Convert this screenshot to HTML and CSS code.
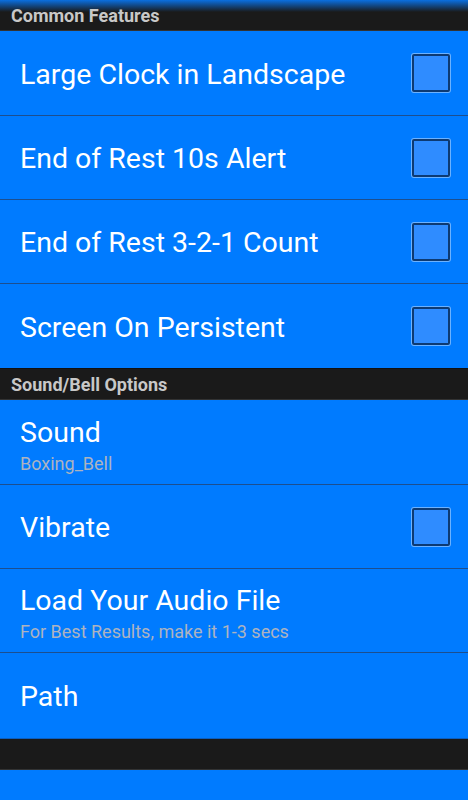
FILE: index.html
```html
<!DOCTYPE html>
<html lang="en">
<head>
  <meta charset="UTF-8">
  <title>Settings</title>
  <link rel="stylesheet" href="styles.css">
</head>
<body>
  <div class="section-head">Common Features</div>
  <div class="pref first">
    <div class="pref-text"><div class="pref-title">Large Clock in Landscape</div></div>
    <div class="check"></div>
  </div>
  <div class="pref">
    <div class="pref-text"><div class="pref-title">End of Rest 10s Alert</div></div>
    <div class="check"></div>
  </div>
  <div class="pref">
    <div class="pref-text"><div class="pref-title">End of Rest 3-2-1 Count</div></div>
    <div class="check"></div>
  </div>
  <div class="pref last">
    <div class="pref-text"><div class="pref-title">Screen On Persistent</div></div>
    <div class="check"></div>
  </div>

  <div class="section-head">Sound/Bell Options</div>
  <div class="pref first two-line">
    <div class="pref-text">
      <div class="pref-title">Sound</div>
      <div class="pref-sub">Boxing_Bell</div>
    </div>
  </div>
  <div class="pref">
    <div class="pref-text"><div class="pref-title">Vibrate</div></div>
    <div class="check"></div>
  </div>
  <div class="pref two-line">
    <div class="pref-text">
      <div class="pref-title">Load Your Audio File</div>
      <div class="pref-sub">For Best Results, make it 1-3 secs</div>
    </div>
  </div>
  <div class="pref last big">
    <div class="pref-text"><div class="pref-title">Path</div></div>
  </div>

  <div class="section-head empty"></div>
  <div class="pref last tail"></div>
</body>
</html>
```

FILE: styles.css
```css
body {
  margin: 0;
  background-color: #007bff;
  font-family: Roboto, 'Noto Sans', sans-serif;
  color: white;
  overflow: hidden;
}
.section-head {
  height: 32px;
  box-sizing: border-box;
  padding: 5px 11px 0;
  background-color: #1a1a1a;
  color: #c8c8c8;
  font-size: 18px;
  font-weight: bold;
  line-height: 21px;
  border-top: 1px solid #111;
  border-bottom: 1px solid #333;
}
.section-head:first-child {
  height: 31px;
  border-top: none;
  background: linear-gradient(to bottom, #0a6fe0 0, #1a1a1a 12px);
}
.section-head.empty {
  border-top-color: #0b5ec0;
}
.pref {
  height: 84px;
  box-sizing: border-box;
  display: flex;
  align-items: center;
  padding: 3px 18px 0 20px;
  border-bottom: 1px solid #1d4f8f;
}
.pref.first {
  height: 85px;
}
.pref.two-line {
  padding-top: 6px;
}
.pref.last {
  border-bottom: none;
}
.pref.big {
  height: 85px;
}
.pref.tail {
  height: 40px;
}
.pref-text {
  flex: 1;
}
.pref-title {
  font-size: 28.5px;
  line-height: 34px;
}
.pref-sub {
  margin-top: 3px;
  font-size: 18px;
  line-height: 22px;
  color: #adb3bf;
}
.check {
  width: 38px;
  height: 38px;
  margin-top: -3px;
  box-sizing: border-box;
  border: 2px solid #0d3a72;
  background-color: #2f8cff;
  box-shadow: 0 0 0 1px #6cb2ff;
  border-radius: 2px;
}
```
